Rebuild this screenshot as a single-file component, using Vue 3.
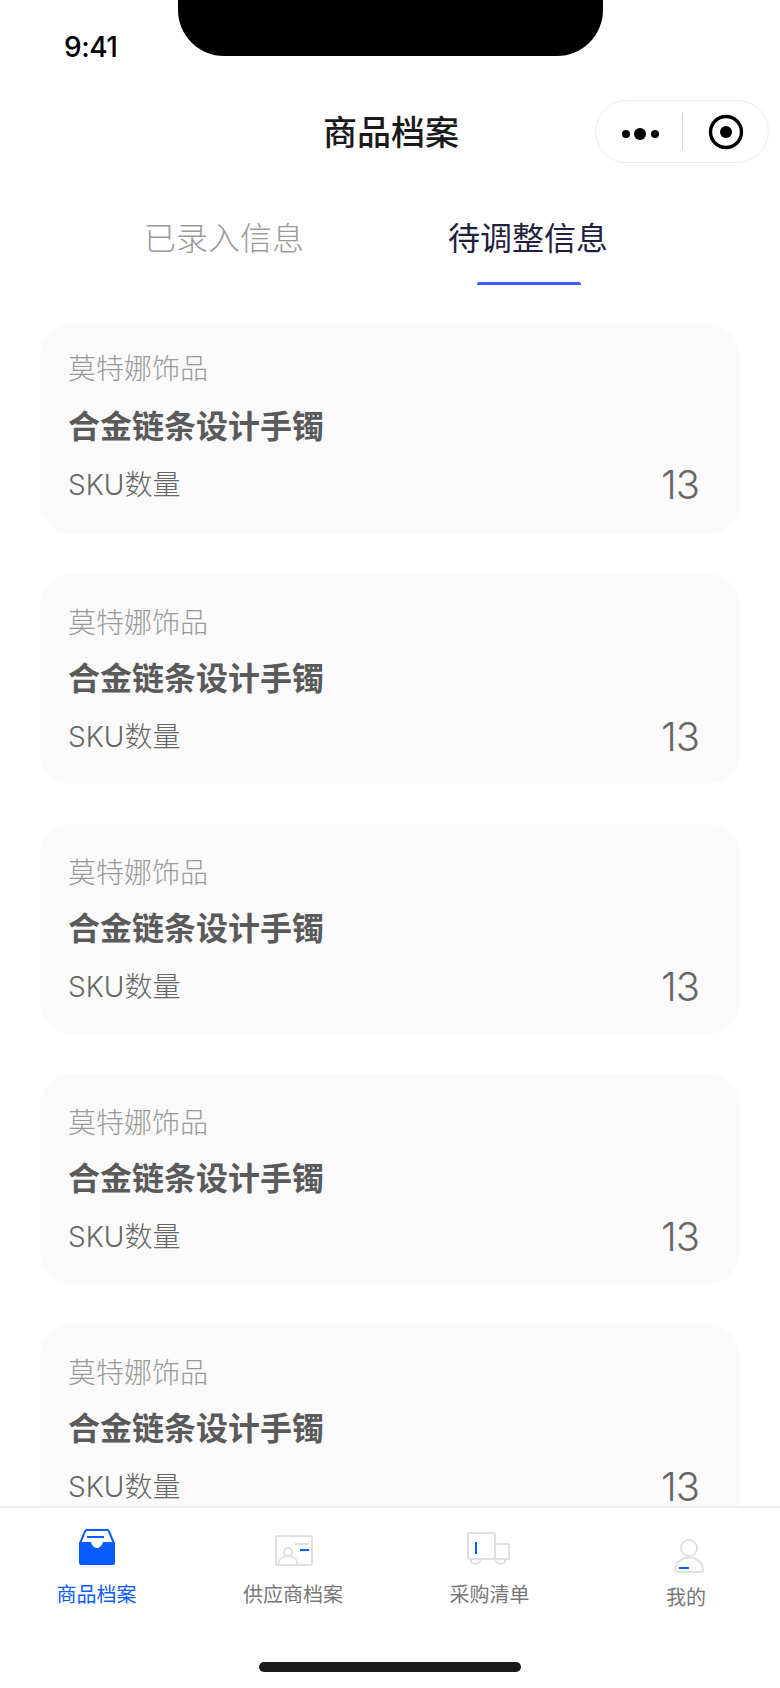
<script setup>
const cards = [1, 2, 3, 4, 5].map((id) => ({
  id,
  shop: '莫特娜饰品',
  name: '合金链条设计手镯',
  sku: 13,
}))
</script>

<template>
  <div class="page">
    <div class="notch"></div>

    <div class="status">9:41</div>

    <header class="nav">
      <h1 class="nav__title">商品档案</h1>
      <div class="capsule">
        <svg class="capsule__more" viewBox="0 0 44 14" width="44" height="14" aria-hidden="true">
          <circle cx="7" cy="7" r="4" fill="#000" />
          <circle cx="21" cy="7" r="6" fill="#000" />
          <circle cx="36" cy="7" r="4" fill="#000" />
        </svg>
        <span class="capsule__line"></span>
        <svg class="capsule__target" viewBox="0 0 36 36" width="36" height="36" aria-hidden="true">
          <circle cx="18" cy="18" r="15.5" fill="none" stroke="#000" stroke-width="3.4" />
          <circle cx="18" cy="18" r="6" fill="#000" />
        </svg>
      </div>
    </header>

    <nav class="tabs">
      <div class="tab">已录入信息</div>
      <div class="tab tab--on">待调整信息</div>
    </nav>

    <main class="list">
      <section v-for="c in cards" :key="c.id" class="card">
        <div class="card__shop">{{ c.shop }}</div>
        <div class="card__name">{{ c.name }}</div>
        <div class="card__row">
          <span>SKU数量</span>
          <span class="card__num">{{ c.sku }}</span>
        </div>
      </section>
    </main>

    <footer class="bar">
      <div class="bar__items">
        <div class="item item--on">
          <svg class="item__icon" viewBox="0 0 36 36" width="36" height="36" aria-hidden="true">
            <path d="M1.2 14 L6 2.4 Q6.4 1 8 1 H28 Q29.6 1 30 2.4 L34.8 14" fill="none" stroke="#0a5cff" stroke-width="2" />
            <path d="M0 13 H12 C13 17 16 19 18 19 S23 17 24 13 H36 V34 a2 2 0 0 1 -2 2 H2 a2 2 0 0 1 -2 -2 Z" fill="#0a5cff" />
            <rect x="8" y="7" width="17" height="2" fill="#0a5cff" />
          </svg>
          <span>商品档案</span>
        </div>
        <div class="item">
          <svg class="item__icon" viewBox="0 0 38 32" width="38" height="32" aria-hidden="true">
            <rect x="1" y="1" width="36" height="29" rx="2" fill="none" stroke="#e0e0e0" stroke-width="2" />
            <circle cx="13" cy="17" r="4" fill="none" stroke="#e0e0e0" stroke-width="2" />
            <path d="M3.5 30 C3.5 24 7.5 21 13 21 S22.5 24 22.5 30" fill="none" stroke="#e0e0e0" stroke-width="2" />
            <rect x="20" y="8" width="14" height="2" fill="#e0e0e0" />
            <rect x="25" y="14" width="9" height="2" fill="#0a5cff" />
          </svg>
          <span>供应商档案</span>
        </div>
        <div class="item">
          <svg class="item__icon" viewBox="0 0 44 34" width="44" height="34" aria-hidden="true">
            <rect x="1" y="1" width="27" height="26" rx="2" fill="none" stroke="#e0e0e0" stroke-width="2" />
            <path d="M28 12 H41 a1 1 0 0 1 1 1 V27 H28" fill="none" stroke="#e0e0e0" stroke-width="2" />
            <path d="M3.5 27 a5 5 0 0 0 10 0 M28.5 27 a5 5 0 0 0 10 0" fill="none" stroke="#e0e0e0" stroke-width="2" />
            <rect x="8" y="10" width="2" height="12" fill="#0a5cff" />
          </svg>
          <span>采购清单</span>
        </div>
        <div class="item item--me">
          <svg class="item__icon" viewBox="0 0 30 35" width="30" height="35" aria-hidden="true">
            <circle cx="15" cy="9" r="8" fill="none" stroke="#e0e0e0" stroke-width="2" />
            <path d="M3 33 a2 2 0 0 1 -2 -2 C1 24 7 18.5 15 18.5 S29 24 29 31 a2 2 0 0 1 -2 2 Z" fill="none" stroke="#e0e0e0" stroke-width="2" />
            <rect x="5" y="28" width="10" height="2" fill="#0a5cff" />
          </svg>
          <span>我的</span>
        </div>
      </div>
      <div class="home"></div>
    </footer>
  </div>
</template>

<style scoped>
.page {
  position: relative;
  width: 780px;
  height: 1688px;
  display: flex;
  flex-direction: column;
  overflow: hidden;
  background: #fff;
  font-family: "Noto Sans CJK SC", "Liberation Sans", sans-serif;
}
.notch {
  position: absolute;
  top: 0;
  left: 178px;
  width: 425px;
  height: 56px;
  background: #000;
  border-radius: 0 0 46px 46px;
}
.status {
  height: 100px;
  box-sizing: border-box;
  padding: 29px 0 0 64px;
  font-family: Inter, "Liberation Sans", sans-serif;
  font-size: 28px;
  line-height: 36px;
  font-weight: 500;
  letter-spacing: -0.5px;
  color: #000;
}
.nav {
  position: relative;
  height: 64px;
  display: flex;
  align-items: center;
  justify-content: center;
  padding-left: 2px;
}
.nav__title {
  margin: 0;
  font-size: 34px;
  line-height: 64px;
  font-weight: 500;
  color: #1a1a1a;
  position: relative;
  top: -1px;
}
.capsule {
  position: absolute;
  right: 11px;
  top: 0;
  width: 174px;
  height: 63px;
  box-sizing: border-box;
  border: 1px solid #ececec;
  border-radius: 32px;
  display: flex;
  align-items: center;
}
.capsule__more {
  margin-left: 23px;
  position: relative;
  top: 2px;
}
.capsule__line {
  width: 1px;
  height: 37px;
  margin-left: 19px;
  background: #d4d4d4;
}
.capsule__target {
  margin-left: 25px;
}
.tabs {
  height: 120px;
  box-sizing: border-box;
  padding: 0 0 0 144px;
  display: flex;
  gap: 144px;
}
.tab {
  position: relative;
  padding-top: 48px;
  font-size: 32px;
  line-height: 48px;
  font-weight: 300;
  color: #9a9a9a;
}
.tab--on {
  color: #1f1f3f;
  font-weight: 400;
}
.tab--on::after {
  content: '';
  position: absolute;
  left: 29px;
  top: 118px;
  width: 104px;
  height: 3px;
  border-radius: 2px 2px 0 0;
  background: #3f5bff;
}
.list {
  flex: 1;
  min-height: 0;
  overflow: hidden;
  padding: 40px 40px 0;
  display: flex;
  flex-direction: column;
  gap: 40px;
}
.card {
  flex: none;
  height: 210px;
  box-sizing: border-box;
  padding: 26px 41px 0 28px;
  border-radius: 32px;
  background: #fafafa;
}
.card:first-child {
  padding-top: 22px;
}
.card__shop {
  font-size: 28px;
  line-height: 42px;
  font-weight: 300;
  color: #999;
}
.card__name {
  margin-top: 12px;
  font-size: 32px;
  line-height: 44px;
  font-weight: 700;
  color: #5a5a5a;
}
.card:first-child .card__name {
  margin-top: 14px;
}
.card__row {
  margin-top: 15px;
  display: flex;
  justify-content: space-between;
  align-items: center;
  height: 44px;
  font-family: Inter, "Noto Sans CJK SC", sans-serif;
  font-size: 28px;
  font-weight: 300;
  color: #666;
}
.card__num {
  margin-top: 4px;
  font-size: 40px;
  font-weight: 300;
  line-height: 36px;
  letter-spacing: -1px;
}
.bar {
  flex: none;
  height: 182px;
  box-sizing: border-box;
  border-top: 2px solid #efefef;
  background: #fff;
  position: relative;
}
.bar__items {
  display: grid;
  grid-template-columns: repeat(4, 196.5px);
  padding-top: 21px;
}
.item {
  height: 88px;
  display: flex;
  flex-direction: column;
  align-items: center;
  font-size: 20px;
  line-height: 30px;
  color: #777;
  margin-left: -3.5px;
}
.item__icon {
  flex: none;
}
.item--on {
  color: #0a5cff;
}
.item:nth-child(1) .item__icon { margin: 0 0 14px 0; }
.item:nth-child(2) .item__icon { margin: 6px 0 12px 1px; }
.item:nth-child(3) .item__icon { margin: 3px 0 13px -1px; }
.item:nth-child(4) .item__icon { margin: 10px 0 8px 5px; }
.home {
  position: absolute;
  left: 259px;
  top: 154px;
  width: 262px;
  height: 10px;
  border-radius: 5px;
  background: #1a1a1a;
}
</style>
